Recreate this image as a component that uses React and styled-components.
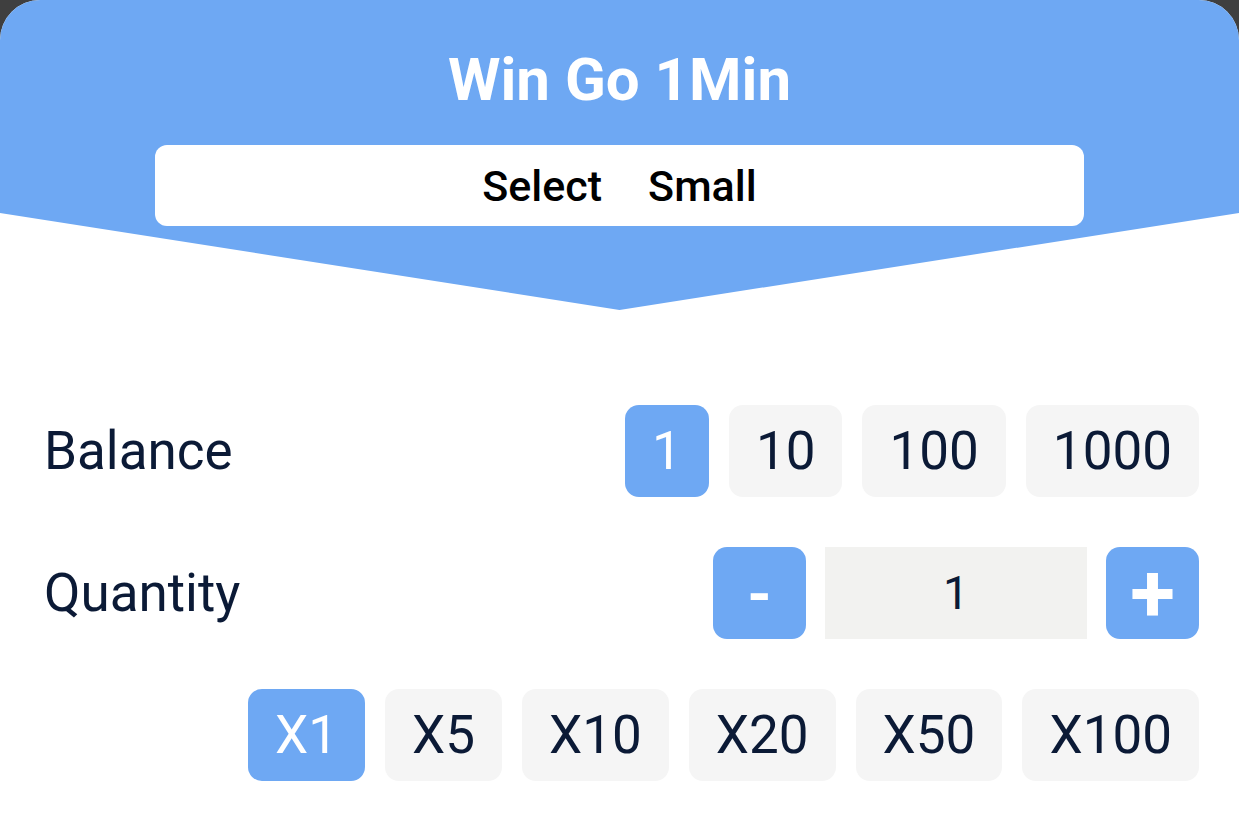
import React, { useState } from 'react';
import styled, { createGlobalStyle } from 'styled-components';

const GlobalStyle = createGlobalStyle`
  body {
    margin: 0;
    background: #3f3f3f;
    font-family: Roboto, "Noto Sans", sans-serif;
  }
`;

const balances = [1, 10, 100, 1000];
const multipliers = [1, 5, 10, 20, 50, 100];

const App = () => {
  const [balance, setBalance] = useState(1);
  const [quantity, setQuantity] = useState(1);

  return (
    <>
      <GlobalStyle />
      <Sheet>
        <Header>
          <Title>Win Go 1Min</Title>
          <SelectBox>
            <span>Select</span>
            <span>Small</span>
          </SelectBox>
        </Header>
        <Body>
          <Row>
            <Label>Balance</Label>
            <ChipGroup>
              {balances.map((b) => (
                <Chip key={b} $active={b === balance} onClick={() => setBalance(b)}>
                  {b}
                </Chip>
              ))}
            </ChipGroup>
          </Row>
          <Row>
            <Label>Quantity</Label>
            <Stepper>
              <StepButton $size={62} onClick={() => setQuantity(Math.max(1, quantity - 1))}>
                -
              </StepButton>
              <Value>{quantity}</Value>
              <StepButton $size={82} onClick={() => setQuantity(quantity + 1)}>
                +
              </StepButton>
            </Stepper>
          </Row>
          <MultiRow>
            {multipliers.map((m) => (
              <Chip key={m} $active={m === quantity} onClick={() => setQuantity(m)}>
                X{m}
              </Chip>
            ))}
          </MultiRow>
        </Body>
      </Sheet>
    </>
  );
};

const Sheet = styled.div`
  background: #ffffff;
  border-radius: 40px 40px 0 0;
  min-height: 835px;
  overflow: hidden;
`;

const Header = styled.div`
  height: 310px;
  background: #6ea8f3;
  clip-path: polygon(0 0, 100% 0, 100% 213px, 50% 100%, 0 213px);
  padding-top: 45px;
  box-sizing: border-box;
  display: flex;
  flex-direction: column;
  align-items: center;
`;

const Title = styled.h1`
  margin: 0;
  color: #ffffff;
  font-size: 60px;
  font-weight: 700;
  line-height: 70px;
`;

const SelectBox = styled.div`
  margin-top: 30px;
  width: 929px;
  height: 81px;
  background: #ffffff;
  border-radius: 12px;
  display: flex;
  justify-content: center;
  align-items: center;
  gap: 46px;
  color: #000000;
  font-size: 43px;
  font-weight: 500;
`;

const Body = styled.div`
  padding: 95px 40px 0 44px;
  display: flex;
  flex-direction: column;
  gap: 50px;
`;

const Row = styled.div`
  display: flex;
  justify-content: space-between;
  align-items: center;
  height: 92px;
`;

const MultiRow = styled(Row)`
  justify-content: flex-end;
  gap: 20px;
`;

const Label = styled.div`
  color: #0b1a36;
  font-size: 53px;
`;

const ChipGroup = styled.div`
  display: flex;
  gap: 20px;
`;

const Chip = styled.div`
  height: 92px;
  padding: 0 27px;
  border-radius: 14px;
  display: flex;
  align-items: center;
  justify-content: center;
  box-sizing: border-box;
  font-size: 53px;
  background: ${(p) => (p.$active ? '#6ea8f3' : '#f5f5f5')};
  color: ${(p) => (p.$active ? '#ffffff' : '#0b1a36')};
  cursor: pointer;
`;

const Stepper = styled.div`
  display: flex;
  gap: 19px;
`;

const StepButton = styled.div`
  width: 93px;
  height: 92px;
  border-radius: 14px;
  background: #6ea8f3;
  color: #ffffff;
  font-size: ${(p) => p.$size}px;
  font-weight: 700;
  display: flex;
  align-items: center;
  justify-content: center;
  cursor: pointer;
`;

const Value = styled.div`
  width: 262px;
  height: 92px;
  background: #f2f2f0;
  color: #0b1a36;
  font-size: 46px;
  display: flex;
  align-items: center;
  justify-content: center;
`;

export default App;
